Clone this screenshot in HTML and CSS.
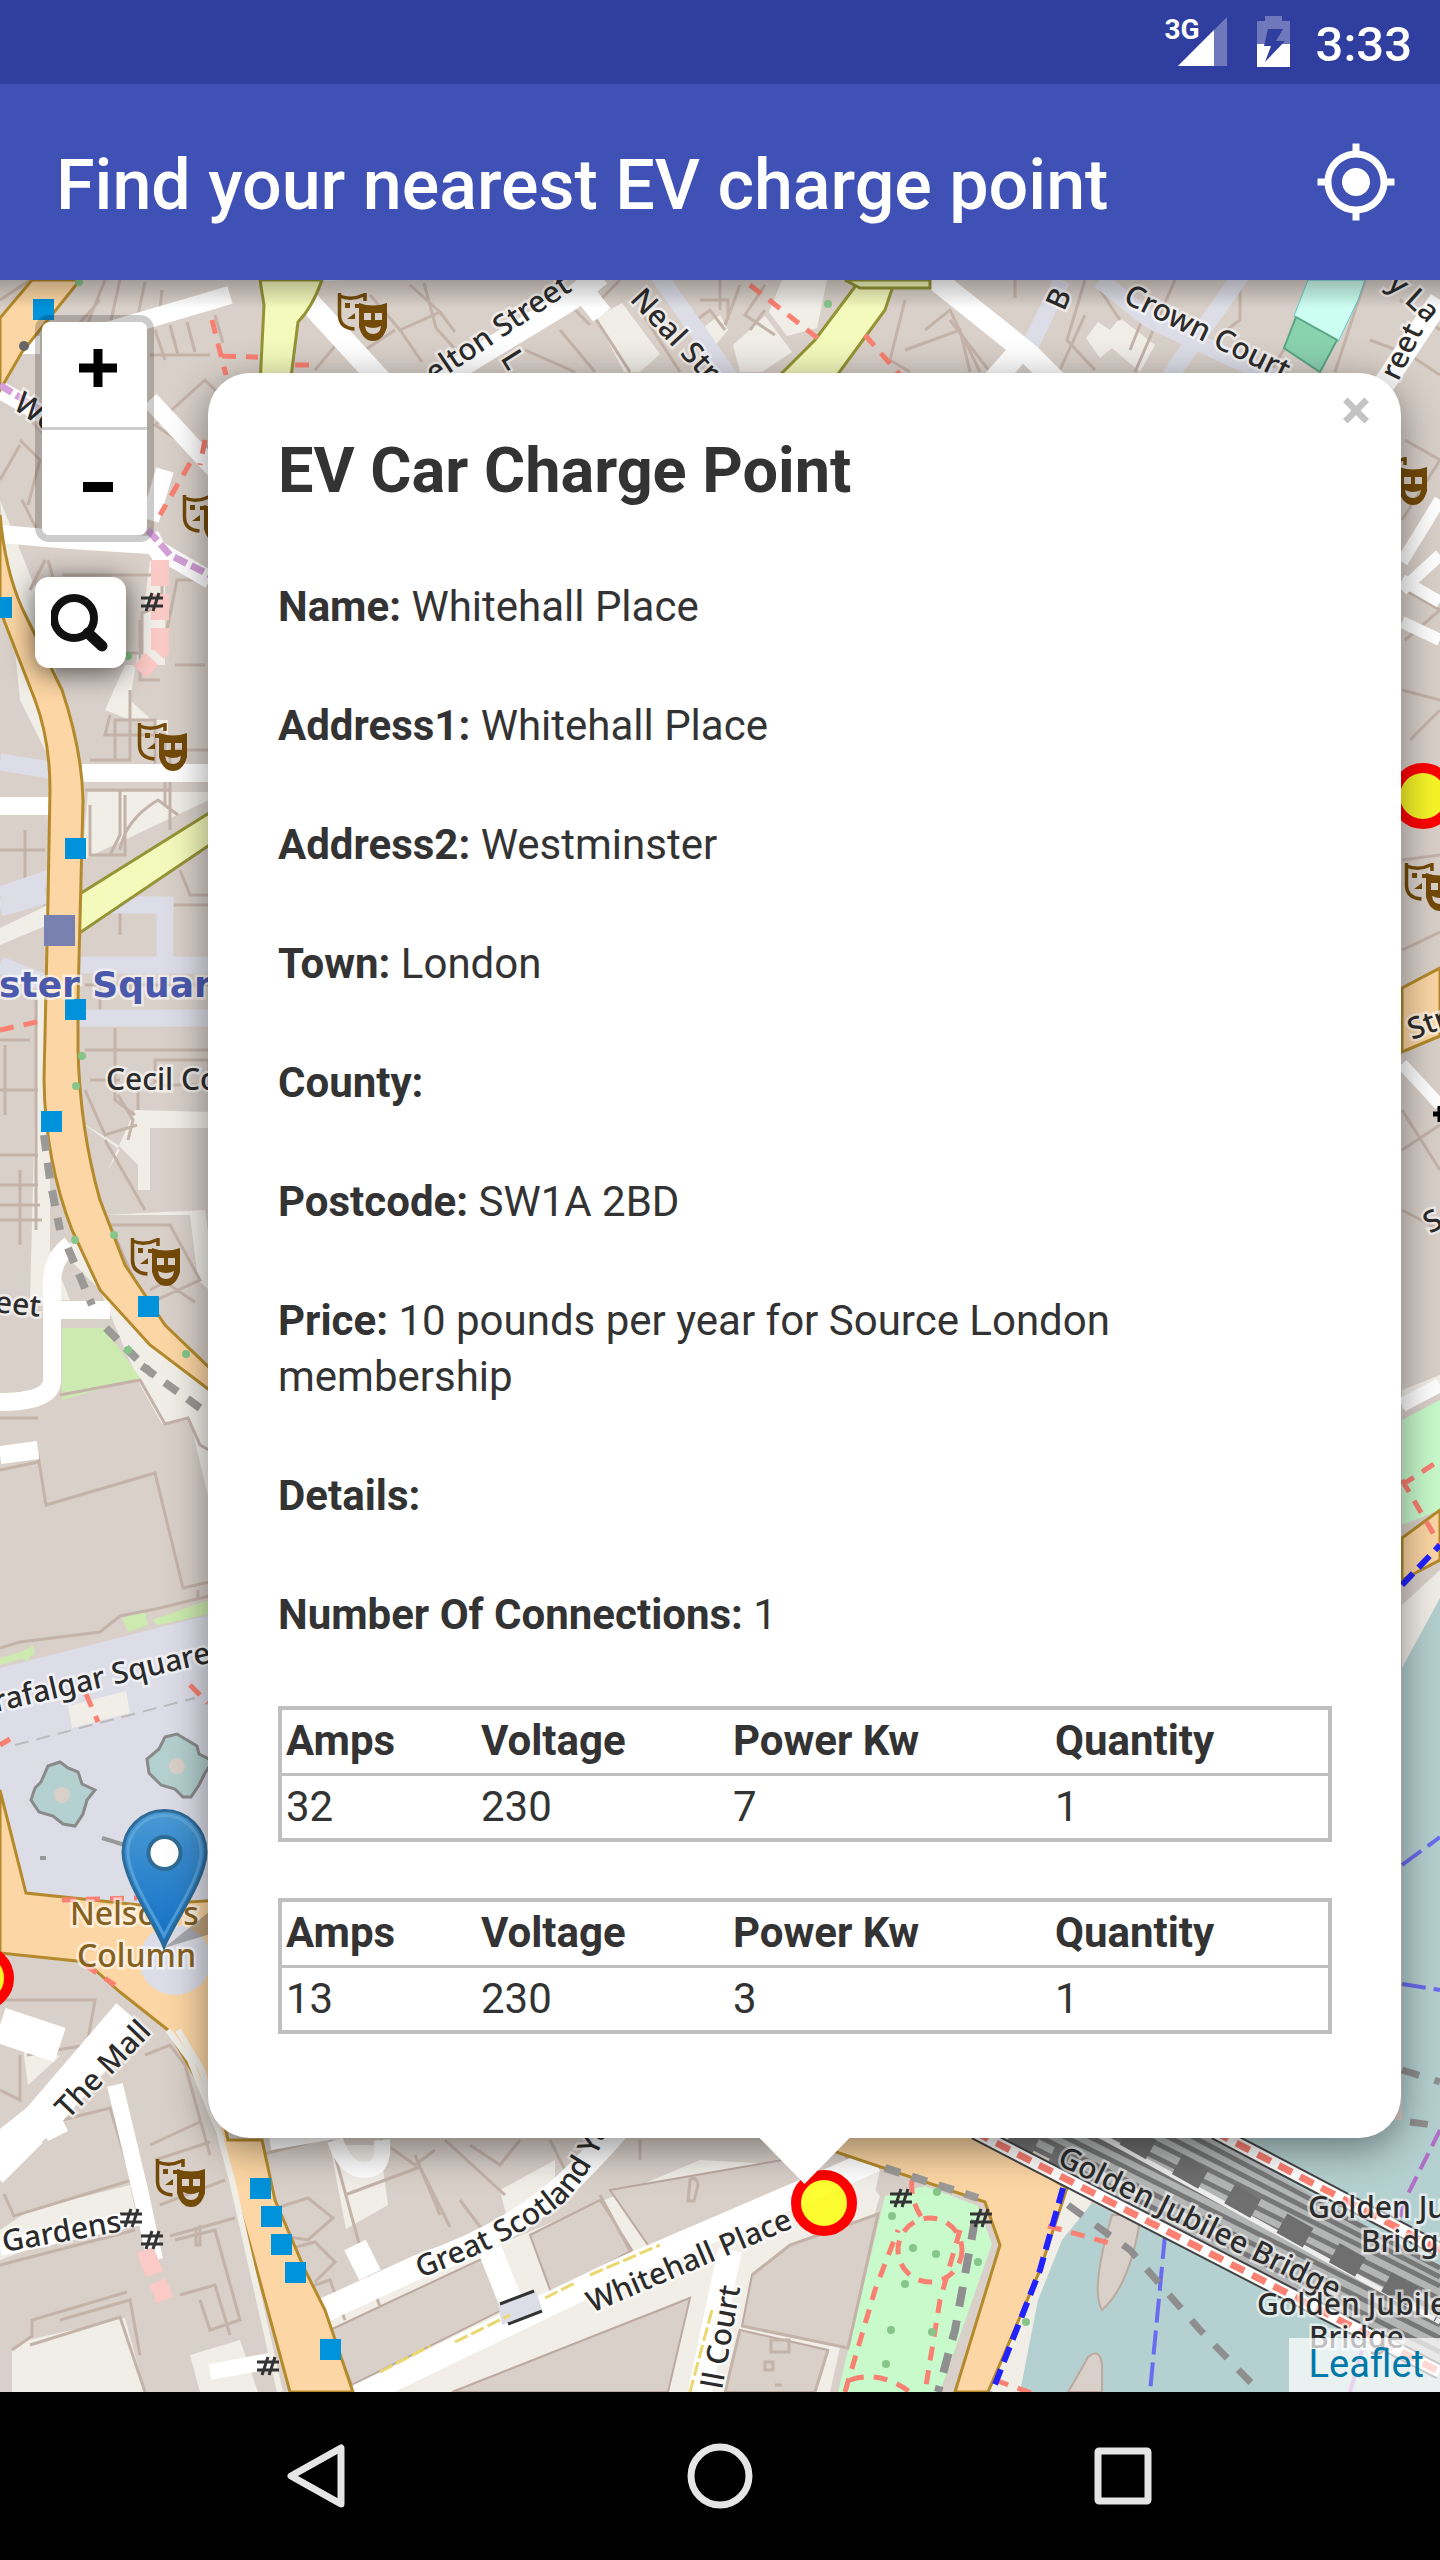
FILE: index.html
```html
<!DOCTYPE html>
<html lang="en">
<head>
<meta charset="utf-8">
<meta name="viewport" content="width=device-width, initial-scale=1">
<title>Find your nearest EV charge point</title>
<link rel="stylesheet" href="styles.css">
</head>
<body>
<div class="screen">
  <div class="status">
    <div class="signal">
      <span class="network">3G</span>
      <svg class="bars" viewBox="0 0 49 49" aria-hidden="true"><path d="M0 49L49 0V49z" fill="#fff" opacity=".3"/><path d="M0 49L36 13V49z" fill="#fff"/></svg>
    </div>
    <svg class="battery" viewBox="0 0 33 51" aria-hidden="true">
      <path d="M8 0h17v5h8v23H0V5h8z" fill="#6f78ba"/><path d="M0 28h33v23H0z" fill="#fff"/>
      <path d="M11 13h15l-7 12h9L8 46l6-16H7z" fill="#303f9f"/>
    </svg>
    <time class="clock">3:33</time>
  </div>

  <header class="appbar">
    <h1 class="title">Find your nearest EV charge point</h1>
    <button class="locate" type="button" aria-label="My location">
      <svg viewBox="0 0 24 24" aria-hidden="true"><path fill="#fff" d="M12 8c-2.21 0-4 1.79-4 4s1.79 4 4 4 4-1.790 4-4-1.790-4-4-4zm8.940 3c-.46-4.170-3.770-7.480-7.940-7.940V1h-2v2.060C6.830 3.520 3.520 6.830 3.060 11H1v2h2.060c.46 4.170 3.770 7.480 7.940 7.940V23h2v-2.060c4.170-.46 7.480-3.770 7.940-7.940H23v-2h-2.060zM12 19c-3.870 0-7-3.130-7-7s3.130-7 7-7 7 3.130 7 7-3.130 7-7 7z"/></svg>
    </button>
  </header>

  <main class="map">
    <svg class="tiles" viewBox="0 280 1440 2112" preserveAspectRatio="xMidYMid slice" aria-label="Street map of central London">
      <defs>
        <g id="theatre">
          <path d="M1.500 1v22q0 13 15 14M27 1v8M1.500 4q12 5 24-1" fill="none" stroke="#734a08" stroke-width="3.500"/>
          <path d="M7 11h5v5H7zM17 12h5v4h-5zM9 27l8-6v6z" fill="#734a08"/>
          <path fill-rule="evenodd" d="M21 11q14 5 28 0v24q-4 14-14 14t-14-14zM26 21v7h7v-7zm11 0v7h7v-7zM27 34q8 4 16 0-1 8-8 8t-8-8z" fill="#734a08"/>
        </g>
        <g id="gate"><path d="M-11-4H11M-11 4H11M-6 9L0-9M1 9L7-9" fill="none" stroke="#333" stroke-width="3"/></g>
        <linearGradient id="pin" x2="0" y2="1"><stop stop-color="#4a9ad4"/><stop offset="1" stop-color="#126fc6"/></linearGradient>
        <path id="scotland" d="M420 2278Q514 2244 564 2202Q594 2172 614 2112"/>
      </defs>
      <rect y="280" width="1440" height="2112" fill="#d9d0c9"/>

      <!-- open ground between the buildings -->
      <g class="ground">
        <path d="M82 860L209 800V792H88zM78 1120L120 1150L108 1170L135 1110L209 1112V1128H150V1190H138V1165L118 1145zM105 1215H190L198 1280L209 1290V1240L205 1210zM95 1225L122 1280L209 1380V1500L190 1420L162 1424L140 1385L100 1290L60 1250z"/>
        <path d="M105 710L125 665H165V580L150 560 140 640 130 700 168 735V720H130zM0 500L40 600 62 700 50 760 20 700z"/>
        <path d="M0 928L48 905V925L0 945zM38 990H50V1250L70 1300 30 1300z"/>
        <path d="M596 318L622 303 660 354 640 372H624z"/><path d="M733 345L765 316 792 352 762 372H740zM782 280h45l-10 48-30 8-18-24zM700 330l20-15 8 15-18 22z"/>
        <path d="M1086 338L1098 322 1110 330 1120 318 1155 345 1140 372 1112 348 1100 358z"/>
        <path d="M12 2350L28 2340 125 2318 145 2392H12zM30 2210L130 2185 135 2210 0 2260V2230zM22 2040L60 2056 28 2085zM190 2355L240 2340 258 2392H200z"/>
        <path d="M330 2145h50l8 60-42 24zM500 2190l55-30v30l-45 40zM320 2320L700 2160 880 2170 830 2392H660L690 2310 320 2392z"/>
        <path d="M1058 2180L1092 2200 1020 2392H975zM1402 1390L1440 1375V1392L1402 1410zM1402 1605L1440 1570V1600L1402 1670z"/>
      </g>
      <path d="M355 2392L690 2205 860 2170 880 2196 820 2392z" fill="#f1eee8"/>
      <path d="M330 2330L490 2255 512 2305 352 2385zM530 2235L600 2200 632 2250 552 2295zM610 2190L840 2150 860 2172 650 2248zM452 2392L690 2298 668 2392zM752 2275L790 2245 878 2214 848 2348 742 2326zM740 2330L828 2350 815 2392H725z" class="house"/>

      <!-- parks and water -->
      <path d="M62 1328H105L140 1378 62 1400zM0 1658L34 1648V1655L0 1665zM15 1655L34 1645 28 1662zM122 1618L145 1612 148 1625 128 1632zM152 1620L209 1600V1614L158 1625z" fill="#cdebb0"/>
      <path d="M885 2196L925 2186 978 2206 992 2244 940 2392H838zM1402 1420L1440 1400V1510L1402 1525z" fill="#c8facc"/>
      <path d="M1092 2203L1150 2230 1200 2120H1402V1668L1440 1598V2392H1020L1038 2300 1062 2240z" fill="#b5d0d0"/>
      <path d="M1120 2215q10-12 20 5-10 65-38 90-12-20 10-95zM1068 2392q12-20 20-35 12-10 14 8v27z" class="house"/>

      <!-- building outlines -->
      <g class="outline">
        <path d="M85 330L105 280M110 325L120 280M138 315L145 282M160 310L162 290M0 300L30 280M60 345L100 300M155 330l10 30M170 325l8 30M187 322l8 30M215 315l8 28M150 355h60M155 425l50-45 35 35-40 40zM20 445L0 480M20 440l20 20-12 45M30 420L80 470M22 500l14 28M30 590L45 560M48 560l8 28M140 620v60h20M165 640l12 -60h32M175 665h30M62 575h100v30l-20 8v40h-60M90 760h40v-70M110 715l-5 20h60v70M115 760V720h40v45"/>
        <path d="M85 790h85v40M90 805v50h35v-60M120 790v45l-10 20M170 790v-40h39M120 850q5-30 38-50l20 15M25 830v60l20 15M0 850h45M120 895v40M150 870l30-5 29-20M180 870l10 25h19M135 905h74M100 980v45M85 985h124M130 985v10M115 1028V1100l20 15M85 1090l20 45 32-10M155 1060h54v25h-54zM148 1085h61M138 1110v-28M90 1080h30M85 1050h124M105 1140l40 70M118 1095l15 25-5 20M0 1040h30M5 1045v70M0 1090h38M0 1155h38M0 1185h38M0 1205h40M0 1220h42M36 1000v230M20 1170v75M110 1225h60l30 55-55 25zM150 1290l15-8 30 20"/>
        <path d="M0 1418h38M60 1395L140 1380 165 1424 188 1418 200 1445 209 1450M38 1455L46 1505 155 1473 183 1588 209 1582M0 1470l38-8M0 1648l20-6 80-10 20-16 40-8 49-12M198 1590v10"/>
        <path d="M0 2000h95l-8 45-60 10M0 2090l20 10v-45M0 2130l30 15M30 2128l80-20 22 72-118 36-10-22M145 2055l25-10 15 20 25 90M150 2145l52-24M155 2160l55-18M160 2205l65-25M170 2236l65-18M175 2240l40-10 25 90-30 10-10-30M180 2295l35-10 15 50M60 2320l70-20 10 55M0 2265l135-35M30 2345l90-28 25 75M12 2350l20-14v-16l95-28"/>
        <path d="M260 2155l70-18 30 110 20 60M270 2210l38-12 25 20-25 22-25-4M285 2250l30-8 20 20-20 20M300 2290l30-10 15 40M345 2195l75-28 30 60M380 2140l35 25 20-15M415 2155l25 60M445 2140l60 55M470 2145l30 20 20-25M460 2200l30 40M550 2140l20 40 30-15M600 2195l35 65M640 2140v20M690 2180q6-5 8 5l-4 16h-6zM200 2225v20h-4v-18"/>
        <path d="M370 295L400 330 440 312 410 285M400 330l22 32M440 312l15 20M424 283l12 45 20 22M340 340l-25 30M365 350l30-20M530 330l40-25 20 20M525 350l50 22M560 330l35 42M600 300l20-20M590 310l40 62M640 310l40 62M690 325l20-15 15 20M700 300h28v20M720 280v30M740 285l-15 40M750 330l15-20M765 285l-20 30 30 20M905 300l-15 60 20 12M905 350l55-20 10 42M925 330l25-20 30 62M950 320l40 52M1015 280v18M1060 370l25-55M1085 280l-18 60 28 30M1100 290l20 30M1150 300l-20 50M1175 280l-40 92M1240 280v40l-20 15M1270 372l25-40M1335 372l30-92M1370 340l40 15 30 20M1400 300l40 30M1405 440l35 20M1402 520l38-60M1405 640l35-30-35-20M1402 690l38 10M1410 740l30-30M1402 860l38-5M1402 950l38-18M1402 1110l38 60M1402 1150l38-25M1402 1210l38 20"/>
        <path d="M752 2275l38-30 88-31-30 134-106-22M740 2330l-15 62M828 2350l-13 42M771 2340h18v12h-18zM765 2362h8v8h-8zM775 2385h7"/>
      </g>

      <!-- minor streets -->
      <g class="lane">
        <path d="M0 895L50 878M0 762L50 770M78 905H165V965M0 908L46 895M75 965H209M75 1018H209M0 965L50 985M1062 280L1028 350M1100 280L1150 320 1300 390M1245 270L1160 390M655 270L735 385M300 275L420 265"/>
      </g>
      <g class="street">
        <path d="M0 345H40M0 390L70 430M60 345L230 295M0 534L70 540 150 545 210 580M150 400L215 470M165 565L150 535M0 806H50M82 773H209M165 470L150 520" />
        <path d="M307 300L385 385M600 275L570 300 430 385M582 290L602 315M930 275L1030 355 1065 390M1025 345L985 390M1440 300L1380 390" stroke-width="22"/>
        <path d="M1402 622L1440 640M1402 580L1440 602M1402 1064L1440 1105M1402 562L1440 500M1402 590L1440 555" stroke-width="12"/>
        <path d="M70 1245Q50 1260 52 1290V1380Q52 1402 0 1402M52 1310H110M0 1455L38 1450" stroke-width="18"/>
        <path d="M130 2015L40 2120 -10 2160M0 2025L60 2045M-10 2170L30 2130M40 2125l20-10" stroke-width="36"/>
        <path d="M115 2085L140 2190 155 2260M0 2248L150 2215M210 2372L275 2360" stroke-width="16"/>
        <path d="M320 2312L420 2266Q520 2232 580 2170T610 2130M355 2245L370 2275M490 2250L510 2300M350 2400L620 2270 830 2180 875 2160M730 2250L700 2392" stroke-width="24"/>
        <path d="M335 2140Q345 2170 365 2170T382 2140M270 2142L340 2130" stroke-width="16"/>
        <path d="M1402 1405L1440 1385" stroke-width="14"/>
      </g>
      <path d="M498 2305l38-14 6 18-40 16z" fill="#dddde8"/>
      <path d="M500 2304l34-13M508 2324l34-13" stroke="#333" stroke-width="3"/>

      <!-- secondary roads -->
      <path d="M260 280H322Q312 308 298 322L290 385H260L264 305zM860 280H895L885 310 830 385H770L815 340z" class="yellow"/>
      <path d="M845 280h85v8h-70z" class="yellow"/>
      <path d="M78 895L214 810V842L78 934z" class="yellow"/>

      <!-- plaza -->
      <path d="M0 1668L220 1612V1905H140L26 1893 0 1790z" fill="#dddde8"/>
      <path d="M68 1706l58-15 4 22-58 15z" class="ground"/>
      <path d="M15 1745L195 1698" stroke="#bbb" stroke-width="2" stroke-dasharray="14 8"/>
      <path d="M48 1766l12-4 8 6 10 4 4 12 13 6-8 10-4 14-8 12-12-2-10-8-14-4-8-12 4-12 6-6z" class="pond"/><circle cx="62" cy="1795" r="8" fill="#d9d0c9"/>
      <path d="M165 1737l12-3 10 6 10 6 2 8 14 7-8 12-6 12-8 12-8 0-8-8-14-4-12-12-2-14 12-10z" class="pond"/><circle cx="177" cy="1766" r="8" fill="#d9d0c9"/>
      <path d="M102 1838l26 8 4 30M40 1858h6" stroke="#999" stroke-width="4" fill="none"/>

      <!-- primary roads -->
      <path d="M32 280H80L22 352 0 390V318z" class="primary"/>
      <path d="M0 515Q5 570 22 608L62 690Q82 750 83 800L78 1000V1050Q80 1130 100 1200L125 1265 165 1325 220 1378V1398L150 1345 100 1290 72 1230Q45 1160 44 1080L48 900 50 790Q50 740 35 700L0 610z" class="primary"/>
      <path d="M0 1790L26 1893 140 1905 220 1900V2105L228 2140 262 2140 275 2200 305 2270 325 2310 353 2392H290L250 2245 220 2140 200 2085 168 2030 120 1992 86 1962 0 1953z" class="primary"/>
      <ellipse cx="175" cy="1960" rx="36" ry="35" fill="#dddde8"/>
      <path d="M830 2130H970L1067 2188 1040 2270 988 2392H955L1000 2245 985 2202 830 2150z" class="primary"/>
      <path d="M1402 988L1440 968V1036L1402 1052zM1402 1538L1440 1510V1560L1402 1580z" class="primary"/>
      <path d="M168 2030L190 2060 222 2140M178 2030L202 2070 232 2180 280 2392" fill="none" stroke="#f1eee8" stroke-width="6"/>
      <path d="M1308 280H1365L1358 300 1338 342 1294 316z" fill="#ccfff1" stroke="#6cc" />
      <path d="M1296 317L1337 340 1320 372 1284 348z" fill="#8ad3af" stroke="#5aa585" stroke-width="2"/>

      <!-- footpaths -->
      <g class="path">
        <path d="M212 320L226 375M222 356L258 357M205 440l-5 25M190 463L160 515M750 285L820 340M865 335L900 375M295 365h20M0 1030L46 1020M86 1694l12 28M190 1685l18 18M0 1745l10-6M62 1900l75-2M85 1965l30 20"/>
        <path d="M912 2180q-2 20 10 38M1402 1485L1440 1460M1402 1480L1440 1545M845 2392L875 2290 898 2230M960 2230L940 2300 925 2392M850 2380q30-10 60 12M995 2380l50 18M1048 2226l65 18"/>
        <ellipse cx="930" cy="2250" rx="32" ry="32"/>
      </g>
      <path d="M160 560V650L140 672M145 2250L165 2300" stroke="#fbc9c6" stroke-width="18" fill="none" stroke-dasharray="26 8"/>
      <path d="M0 385L40 410M148 530L170 555 210 575" stroke="#d5a0d8" stroke-width="7" fill="none" stroke-dasharray="14 5"/>
      <path d="M1063 2188L1040 2270 992 2392M1402 1585L1440 1545" stroke="#2222ff" stroke-width="6" fill="none" stroke-dasharray="16 8"/>
      <path d="M1165 2235L1150 2392M1402 1865L1440 1837M1402 1984L1440 1990" stroke="#6b6bf0" stroke-width="4" fill="none" stroke-dasharray="24 8"/>
      <path d="M1440 2130L1405 2200 1350 2392" stroke="#b070c8" stroke-width="4" fill="none" stroke-dasharray="18 8"/>
      <path d="M1068 2205L1130 2250 1200 2330 1260 2392M1402 2070L1440 2082M1410 2122l30 4" stroke="#8f8f8f" stroke-width="7" fill="none" stroke-dasharray="18 16"/>
      <path d="M975 2220L955 2330 938 2392" stroke="#8f8f8f" stroke-width="8" fill="none" stroke-dasharray="20 14"/>
      <path d="M885 2168L978 2198M44 1135L50 1180 60 1230M68 1248L92 1305M106 1328L152 1374M142 1366L200 1408" stroke="#9c9a97" stroke-width="8" fill="none" stroke-dasharray="16 12"/>
      <path d="M380 2372L430 2346M455 2342L510 2315M545 2298L575 2283M590 2275L660 2245M712 2310L690 2392" stroke="#ecd76f" stroke-width="3" fill="none" stroke-dasharray="14 4"/>

      <!-- railway bridge -->
      <path d="M1000 2130H1200L1440 2268V2375L1240 2270z" fill="#b4b6b6"/>
      <g class="rail">
        <path d="M1010 2136L1440 2352M1030 2132L1440 2338M1055 2132L1440 2325M1080 2132L1440 2312M1105 2132L1440 2299M1130 2130L1440 2286M1155 2130L1440 2277M1180 2130L1440 2268"/>
      </g>
      <path d="M1090 2130L1440 2322" stroke="#eee" stroke-width="5"/>
      <path d="M1125 2135L1440 2312" stroke="#6f6f6f" stroke-width="22" stroke-dasharray="30 30"/>
      <path d="M1010 2135L1100 2175" stroke="#777" stroke-width="18" stroke-dasharray="28 18"/>
      <g fill="none">
        <path d="M975 2132L1440 2372M1215 2132L1440 2250" stroke="#444" stroke-width="16"/>
        <path d="M975 2132L1440 2372M1215 2132L1440 2250" stroke="#fff" stroke-width="12"/>
        <path d="M975 2132L1440 2372M1215 2132L1440 2250" stroke="#fa8072" stroke-width="7" stroke-dasharray="15 9"/>
      </g>

      <!-- trees -->
      <g fill="#86c68a"><circle cx="79" cy="282" r="4"/><circle cx="128" cy="656" r="4"/><circle cx="82" cy="1056" r="4"/><circle cx="76" cy="1086" r="4"/><circle cx="114" cy="1235" r="4"/><circle cx="75" cy="1240" r="4"/><circle cx="128" cy="1350" r="4"/><circle cx="186" cy="1354" r="4"/><circle cx="937" cy="2192" r="4"/><circle cx="892" cy="2216" r="4"/><circle cx="913" cy="2248" r="4"/><circle cx="936" cy="2254" r="4"/><circle cx="978" cy="2262" r="4"/><circle cx="905" cy="2284" r="4"/><circle cx="891" cy="2330" r="4"/><circle cx="886" cy="2364" r="4"/><circle cx="932" cy="2332" r="4"/><circle cx="1026" cy="2322" r="4"/><circle cx="828" cy="304" r="4"/></g>

      <use href="#theatre" x="338" y="292"/><use href="#theatre" x="183" y="494"/><use href="#theatre" x="138" y="722"/><use href="#theatre" x="131" y="1237"/><use href="#theatre" x="156" y="2158"/><use href="#theatre" x="1378" y="456"/><use href="#theatre" x="1405" y="862"/>
      <use href="#gate" x="152" y="602"/><use href="#gate" x="131" y="2218"/><use href="#gate" x="152" y="2240"/><use href="#gate" x="268" y="2366"/><use href="#gate" x="901" y="2198"/><use href="#gate" x="981" y="2218"/>
      <circle cx="24" cy="346" r="5" fill="#666"/>
      <path d="M1433 1114h16M1440 1106v16" stroke="#000" stroke-width="5"/>

      <g fill="#0092da">
        <path d="M33 299h21v21H33zM-9 597h21v21H-9zM65 838h21v21H65zM65 999h21v21H65zM41 1111h21v21H41zM138 1296h21v21h-21zM250 2178h21v21h-21zM261 2206h21v21h-21zM271 2234h21v21h-21zM285 2262h21v21h-21zM320 2339h21v21h-21z"/>
      </g>
      <path d="M44 915h31v31H44z" fill="#7981b0"/>

      <g class="labels">
        <text class="station" x="-1" y="997">ster Square</text>
        <text x="106" y="1090">Cecil Co</text>
        <text transform="translate(-6 1312) rotate(6)">eet</text>
        <text transform="translate(12 408) rotate(34)">We</text>
        <text transform="translate(-4 1712) rotate(-13)">rafalgar Square</text>
        <text transform="translate(68 2120) rotate(-46)">The Mall</text>
        <text transform="translate(4 2252) rotate(-10)">Gardens</text>
        <text><textPath href="#scotland">Great Scotland Ya</textPath></text>
        <text transform="translate(592 2313) rotate(-23)">Whitehall Place</text>
        <text transform="translate(722 2390) rotate(-80)">ll Court</text>
        <text transform="translate(434 384) rotate(-34)">elton Street</text>
        <text transform="translate(629 300) rotate(47)">Neal Stre</text>
        <text transform="translate(500 358) rotate(58)">L</text>
        <text transform="translate(1064 312) rotate(-66)">B</text>
        <text transform="translate(1122 302) rotate(26)">Crown Court</text>
        <text transform="translate(1386 286) rotate(42)">y La</text>
        <text transform="translate(1398 382) rotate(-64)">reet</text>
        <text transform="translate(1412 1040) rotate(-20)">Str</text>
        <text transform="translate(1430 1234) rotate(-28)">S</text>
        <text transform="translate(1056 2164) rotate(26)">Golden Jubilee Bridge</text>
        <text x="1308" y="2218">Golden Jubi</text><text x="1361" y="2252">Bridge</text>
        <text x="1257" y="2315">Golden Jubilee</text><text x="1309" y="2348">Bridge</text>
        <g class="poi"><text x="70" y="1925">Nelson's</text><text x="77" y="1967">Column</text></g>
      </g>

      <!-- charge points -->
      <g fill="#ff0" fill-opacity=".8" stroke="#f00" stroke-width="10">
        <circle cx="824" cy="2203" r="28"/><circle cx="1423" cy="796" r="28"/><circle cx="-19" cy="1978" r="28"/>
      </g>
      <!-- current position pin -->
      <path d="M164 1948L209 1912 240 1925z" fill="#000" opacity=".25"/>
      <path d="M164 1947C156 1925 123 1880 123 1852A41.500 41.500 0 0 1 206 1852C206 1880 172 1925 164 1947z" fill="url(#pin)" stroke="#2e6c97" stroke-width="3"/>
      <path d="M164 1936C154 1914 128 1878 128 1852A36.500 36.500 0 0 1 201 1852C201 1878 174 1914 164 1936z" fill="none" stroke="#65addb" stroke-width="3" opacity=".7"/>
      <circle cx="164.500" cy="1853" r="16" fill="#fff" stroke="#2e6c97" stroke-width="4"/>
    </svg>

    <div class="controls">
      <div class="zoom">
        <button type="button" aria-label="Zoom in"><svg viewBox="0 0 38 38" aria-hidden="true"><path d="M14.500 0h9v14.500H38v9H23.500V38h-9V23.500H0v-9h14.500z"/></svg></button>
        <button type="button" aria-label="Zoom out"><svg viewBox="0 0 38 38" aria-hidden="true"><path d="M4 25h30v10H4z"/></svg></button>
      </div>
      <button class="search" type="button" aria-label="Search">
        <svg viewBox="0 0 60 60" aria-hidden="true"><circle cx="23" cy="25" r="20" fill="none" stroke="#111" stroke-width="8"/><path d="M37 40L51 53" stroke="#111" stroke-width="11" stroke-linecap="round"/></svg>
      </button>
    </div>

    <section class="popup">
      <button class="close" type="button" aria-label="Close popup">×</button>
      <h2>EV Car Charge Point</h2>
      <p><b>Name:</b> Whitehall Place</p>
      <p><b>Address1:</b> Whitehall Place</p>
      <p><b>Address2:</b> Westminster</p>
      <p><b>Town:</b> London</p>
      <p><b>County:</b></p>
      <p><b>Postcode:</b> SW1A 2BD</p>
      <p><b>Price:</b> 10 pounds per year for Source London membership</p>
      <p><b>Details:</b></p>
      <p><b>Number Of Connections:</b> 1</p>
      <table>
        <thead><tr><th class="amps">Amps</th><th class="volts">Voltage</th><th class="power">Power Kw</th><th>Quantity</th></tr></thead>
        <tbody><tr><td>32</td><td>230</td><td>7</td><td>1</td></tr></tbody>
      </table>
      <table>
        <thead><tr><th class="amps">Amps</th><th class="volts">Voltage</th><th class="power">Power Kw</th><th>Quantity</th></tr></thead>
        <tbody><tr><td>13</td><td>230</td><td>3</td><td>1</td></tr></tbody>
      </table>
    </section>
    <div class="attribution"><a href="#leaflet">Leaflet</a></div>
  </main>

  <nav class="navbar" aria-label="System">
    <button type="button" aria-label="Back"><svg viewBox="0 0 72 72"><path d="M60 8v56L10 36z"/></svg></button>
    <button type="button" aria-label="Home"><svg viewBox="0 0 72 72"><circle cx="36" cy="36" r="29"/></svg></button>
    <button type="button" aria-label="Recent apps"><svg viewBox="0 0 72 72"><rect x="11" y="11" width="50" height="50" rx="1"/></svg></button>
  </nav>
</div>
</body>
</html>
```
FILE: styles.css
```css
* { box-sizing: border-box; }
body { margin: 0; font-family: Roboto, "Liberation Sans", sans-serif; color: #333; }
button { border: 0; padding: 0; background: none; font: inherit; cursor: pointer; }
svg { display: block; }
.screen { display: flex; flex-direction: column; min-height: 100vh; }

/* status bar */
.status { display: flex; align-items: flex-start; justify-content: flex-end; height: 84px; padding: 16px 28px 0 0; background: #303f9f; color: #fff; }
.signal { display: flex; margin-right: 30px; }
.network { font-size: 28px; line-height: 28px; font-weight: 700; margin-right: -22px; }
.bars { width: 49px; height: 49px; margin-top: 1px; }
.battery { width: 33px; height: 51px; margin-right: 26px; }
.clock { font-size: 49px; line-height: 58px; font-weight: 500; }

/* app bar */
.appbar { display: flex; align-items: center; justify-content: space-between; height: 196px; padding: 0 42px 0 56px; background: #3f51b5; color: #fff; }
.title { margin: 0; padding-top: 6px; font-size: 70px; line-height: 84px; font-weight: 500; }
.locate svg { width: 84px; height: 84px; }

/* map */
.map { position: relative; flex: 1; padding: 93px 39px 252px 208px; overflow: hidden; background: #d9d0c9; }
.map::before { content: ""; position: absolute; z-index: 1; top: 0; left: 0; right: 0; height: 28px; background: linear-gradient(rgba(0,0,0,.25), transparent); }
.tiles { position: absolute; inset: 0; width: 100%; height: 100%; }
.ground { fill: #f1eee8; }
.house { fill: #d9d0c9; stroke: #bca9a0; stroke-width: 2; }
.outline { fill: none; stroke: #c4b3a9; stroke-width: 3; }
.lane { fill: none; stroke: #dddde8; stroke-width: 17; }
.street { fill: none; stroke: #fff; stroke-width: 18; stroke-linejoin: round; }
.yellow { fill: #f4f9bc; stroke: #949436; stroke-width: 3; }
.primary { fill: #fcd6a4; stroke: #b58a2c; stroke-width: 3; }
.pond { fill: #b5d0d0; stroke: #8a8a8a; stroke-width: 3; }
.path { fill: none; stroke: #fa8072; stroke-width: 5; stroke-dasharray: 14 10; }
.rail { fill: none; stroke: #777; stroke-width: 5; }
.labels { font-family: "Noto Sans", sans-serif; font-size: 30px; font-weight: 500; fill: #2b2b2b; stroke: #fff; stroke-opacity: .6; stroke-width: 5; paint-order: stroke; }
.station { font-family: "DejaVu Sans", sans-serif; font-size: 36px; font-weight: 700; fill: #4b59ad; }
.poi { font-size: 32px; fill: #85601f; }

.controls { position: absolute; top: 35px; left: 35px; display: flex; flex-direction: column; align-items: flex-start; gap: 35px; }
.zoom { border: 7px solid rgba(0,0,0,.2); border-radius: 14px; background-clip: padding-box; }
.zoom button { display: grid; place-items: center; width: 105px; height: 105px; padding: 0 0 14px 7px; background: #fff; border-radius: 0 0 8px 8px; }
.zoom button:first-child { height: 108px; border-bottom: 3px solid #ccc; border-radius: 8px 8px 0 0; }
.zoom svg { width: 38px; height: 38px; }
.search { display: grid; place-items: center; width: 91px; height: 91px; border-radius: 14px; background: #fff; box-shadow: 0 4px 28px rgba(0,0,0,.65); }
.search svg { width: 60px; height: 60px; }

/* popup */
.popup { position: relative; padding: 56px 69px 48px 70px; background: #fff; border-radius: 42px; box-shadow: 0 10px 42px rgba(0,0,0,.45); font-size: 42px; line-height: 56px; }
.popup::after { content: ""; position: absolute; top: 100%; left: 50%; width: 90px; height: 46px; margin-left: -45px; background: #fff; clip-path: polygon(0 0, 100% 0, 50% 100%); }
.popup h2 { margin: 0 0 66px; font-size: 63px; line-height: 84px; }
.popup p { margin: 0 0 63px; }
.close { position: absolute; top: 9px; right: 23px; width: 44px; font-size: 56px; line-height: 56px; font-weight: 700; color: #c3c3c3; }
.popup table { width: 100%; margin: 0 0 56px; table-layout: fixed; border-collapse: collapse; border: 4px solid #bfbfbf; }
.popup th, .popup td { height: 66px; padding: 0 4px; text-align: left; line-height: 56px; }
.popup tr { border-bottom: 3px solid #bfbfbf; }
.amps { width: 197px; }
.volts { width: 252px; }
.power { width: 322px; }

.attribution { position: absolute; right: 0; bottom: 0; padding: 0 16px 2px 20px; background: rgba(255,255,255,.7); font-size: 38px; line-height: 52px; }
.attribution a { color: #0078a8; text-decoration: none; }

/* system navigation */
.navbar { display: flex; justify-content: center; height: 168px; background: #000; }
.navbar button { display: grid; place-items: center; width: 28%; }
.navbar svg { width: 72px; height: 72px; fill: none; stroke: #e5e5e5; stroke-width: 7; stroke-linejoin: round; }
```
